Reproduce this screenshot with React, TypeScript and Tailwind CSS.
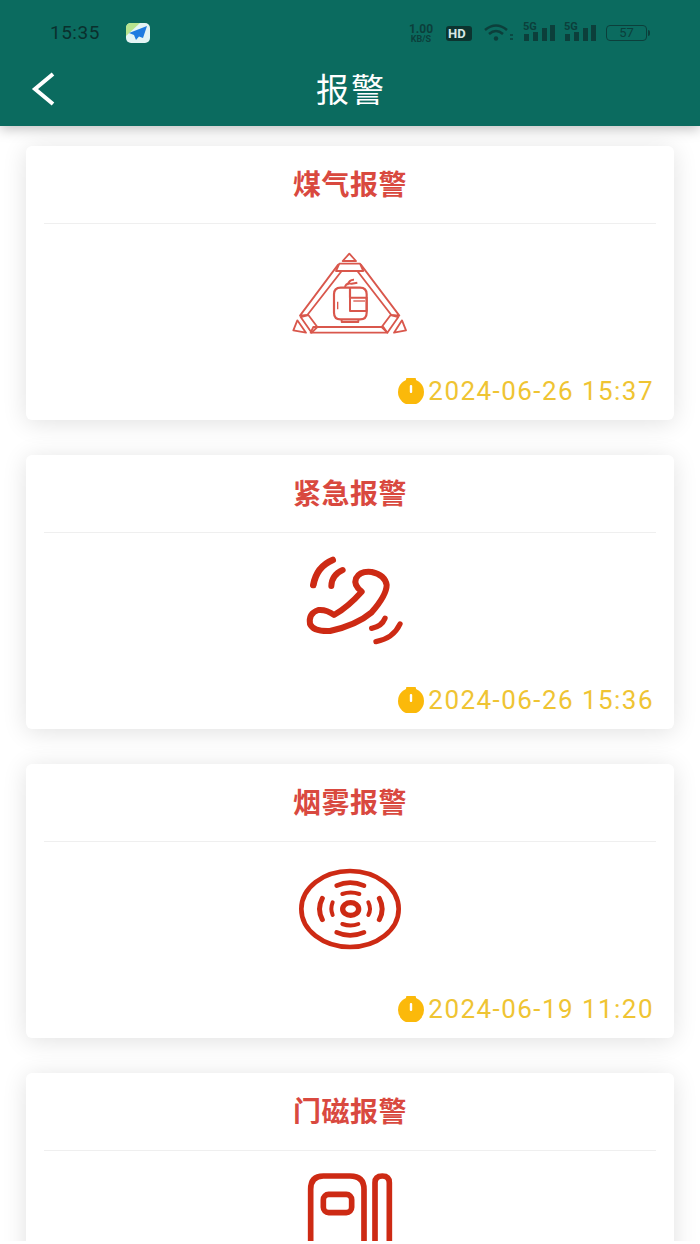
import React from "react";

const GasIcon = () => (
  <svg width="160" height="100" viewBox="0 0 480 300" fill="none" stroke="#d9574c" strokeWidth="5.5" strokeLinejoin="round">
    <path d="M218 60 L238 38 L258 60 Z" />
    <path d="M208 68 L270 68 L280 90 L198 90 Z" />
    <path d="M205 70 L90 224 L112 222 L215 90" />
    <path d="M272 70 L388 224 L364 222 L262 90" />
    <path d="M130 258 L340 258 L352 275 L122 275 Z" />
    <path d="M92 228 L115 222 L142 258 L125 275 Z" />
    <path d="M385 228 L362 222 L335 258 L352 275 Z" />
    <path d="M70 268 L82 238 L108 275 Z" />
    <path d="M408 268 L396 238 L372 275 Z" />
    <path d="M240 170 V140 H212 Q192 140 192 160 V215 Q192 235 212 235 H270 Q290 235 290 215 V160 Q290 140 270 140 H240" strokeWidth="6.5" />
    <path d="M240 170 H290 V210 H240 Z" strokeWidth="6" />
    <path d="M250 180 H285" strokeWidth="4" />
    <path d="M215 235 V243 H265 V235" />
    <path d="M225 138 Q228 125 245 128 L262 125 M232 132 Q238 115 252 116" strokeWidth="6" />
    <path d="M203 182 V205" strokeWidth="4" />
  </svg>
);

const PhoneIcon = () => (
  <svg width="120" height="100" viewBox="0 0 360 300" fill="none" stroke="#cd2a14" strokeWidth="18" strokeLinecap="round" strokeLinejoin="round">
    <path d="M215 125 Q190 105 198 85 Q210 62 245 66 Q285 75 290 105 Q290 135 245 187 Q200 225 120 243 Q70 245 60 222 Q55 190 85 180 Q110 178 132 195 Q175 170 215 125 Z" />
    <path d="M128 30 Q80 50 70 105" strokeWidth="20" />
    <path d="M158 60 Q125 75 124 108" strokeWidth="18" />
    <path d="M245 235 Q275 230 285 205" strokeWidth="16" />
    <path d="M258 275 Q310 265 330 222" strokeWidth="16" />
  </svg>
);

const SmokeIcon = () => (
  <svg width="120" height="100" viewBox="0 0 360 300" fill="none" stroke="#cd2a14" strokeWidth="12" strokeLinecap="round">
    <ellipse cx="180" cy="150" rx="146" ry="114" strokeWidth="14" />
    <ellipse cx="182" cy="150" rx="24" ry="19" strokeWidth="16" />
    <path d="M157 105 Q182 96 208 105" />
    <path d="M140 80 Q180 62 222 80" strokeWidth="14" />
    <path d="M157 195 Q182 204 205 195" />
    <path d="M140 220 Q180 238 222 220" strokeWidth="14" />
    <path d="M128 130 Q120 150 128 168" />
    <path d="M97 118 Q80 150 97 182" strokeWidth="15" />
    <path d="M235 130 Q245 150 235 168" />
    <path d="M268 118 Q285 150 268 182" strokeWidth="15" />
  </svg>
);

const DoorIcon = () => (
  <svg width="120" height="100" viewBox="0 0 360 300" fill="none" stroke="#cd2a14" strokeWidth="17" strokeLinecap="round">
    <path d="M62 300 V85 Q62 45 100 45 H180 Q222 45 222 85 V300" />
    <rect x="100" y="100" width="85" height="55" rx="16" />
    <path d="M255 300 V65 Q255 45 277 45 Q298 45 298 65 V300" />
  </svg>
);

const TimerIcon = () => (
  <svg width="28" height="26" viewBox="0 0 28 26" className="shrink-0">
    <rect x="9" y="0" width="10" height="2.5" rx="1" fill="#fbb90a" />
    <circle cx="14" cy="14" r="13" fill="#fbb90a" />
    <rect x="12.8" y="7" width="2.4" height="8" rx="1" fill="#fff" />
  </svg>
);

const SignalIcon = () => (
  <div className="relative w-[32px] h-[18px]">
    <span className="absolute left-0 -top-[3px] text-[11px] font-bold leading-none text-[#0c3f3b]">5G</span>
    <svg width="32" height="18" viewBox="0 0 32 18" fill="#0c3f3b">
      <rect x="1" y="10" width="5" height="7" />
      <rect x="10" y="8" width="5" height="9" />
      <rect x="19" y="4" width="5" height="13" />
      <rect x="27" y="1" width="5" height="16" />
    </svg>
  </div>
);

const StatusBar = () => (
  <div className="h-[66px] flex items-center pl-[50px] pr-[50px] text-[#0c3f3b]">
    <span className="text-[19px] tracking-[0.5px] mr-[24px] text-[#0a302d]">15:35</span>
    <svg width="24" height="20" viewBox="0 0 24 20" className="mr-auto ml-[2px]">
      <rect width="24" height="20" rx="5" fill="#e4f4f4" />
      <path d="M0 5 Q0 0 5 0 H14 L0 13 Z" fill="#b7e38e" />
      <path d="M21 3 L3 10 L8 12 L10 17 L13 13.5 L17 15 Z" fill="#1f7be0" />
    </svg>
    <div className="flex flex-col items-center font-bold mr-[10px] w-[30px]">
      <span className="text-[12px] leading-[12px]">1.00</span>
      <span className="text-[9px] leading-[9px]">KB/S</span>
    </div>
    <div className="w-[26px] h-[15px] rounded-[3px] bg-[#0c3430] text-[#d8e8e5] text-[13px] font-bold leading-[15px] pl-[2px] mr-[12px]">HD</div>
    <svg width="30" height="18" viewBox="0 0 30 18" fill="none" stroke="#0c3f3b" strokeWidth="2.6" className="mr-[9px]">
      <path d="M1 6 Q12 -3 23 6" />
      <path d="M5 10 Q12 4 19 10" />
      <circle cx="12" cy="14.5" r="2.2" fill="#0c3f3b" stroke="none" />
      <path d="M26 11 h3 M26 15 h3" strokeWidth="1.6" />
    </svg>
    <SignalIcon />
    <div className="w-[9px]" />
    <SignalIcon />
    <div className="w-[10px]" />
    <div className="flex items-center">
      <div className="w-[41px] h-[16px] rounded-[4px] border border-[#0c3f3b] text-[13px] leading-[14px] text-center">57</div>
      <div className="w-[2px] h-[6px] ml-[1px] bg-[#0c3f3b] rounded-r-sm" />
    </div>
  </div>
);

const AlarmCard = ({ title, time, children }: { title: string; time: string; children: React.ReactNode }) => (
  <div className="h-[274px] shrink-0 bg-white rounded-[6px] px-[18px] shadow-[0_3px_24px_rgba(0,0,0,0.12)]">
    <div className="h-[78px] flex items-center justify-center border-b border-[#efefef] text-[28px] font-bold text-[#d9493f] tracking-[0.5px]">
      <span className="translate-y-[1px]">{title}</span>
    </div>
    <div className="h-[134px] flex items-center justify-center">{children}</div>
    <div className="h-[42px] mt-[12px] flex items-center justify-end gap-[3px] pr-[2px] text-[26px] text-[#efc433] font-['Roboto',sans-serif] tracking-[1.45px]">
      <TimerIcon />
      {time}
    </div>
  </div>
);

const App: React.FC = () => {
  return (
    <div className="w-[700px] h-[1244px] overflow-hidden bg-white flex flex-col font-['Roboto','Noto_Sans_CJK_SC',sans-serif]">
      <div className="h-[126px] shrink-0 bg-[#0b6b5f] shadow-[0_3px_12px_rgba(0,0,0,0.25)] relative z-10">
        <StatusBar />
        <div className="h-[48px] flex items-center justify-center relative">
          <svg width="26" height="34" viewBox="0 0 26 34" fill="none" stroke="#fff" strokeWidth="4" className="absolute left-[31px] top-[6px]">
            <path d="M22 2 L4 17 L22 32" />
          </svg>
          <span className="text-[33px] text-white tracking-[2px] pl-[2px] -translate-y-[1px] font-['Noto_Sans_CJK_SC',sans-serif]">报警</span>
        </div>
      </div>
      <div className="h-[1115px] overflow-hidden flex flex-col gap-[35px] px-[26px] pt-[20px]">
        <AlarmCard title="煤气报警" time="2024-06-26 15:37">
          <GasIcon />
        </AlarmCard>
        <AlarmCard title="紧急报警" time="2024-06-26 15:36">
          <PhoneIcon />
        </AlarmCard>
        <AlarmCard title="烟雾报警" time="2024-06-19 11:20">
          <SmokeIcon />
        </AlarmCard>
        <AlarmCard title="门磁报警" time="">
          <div className="self-start mt-[10px]">
            <DoorIcon />
          </div>
        </AlarmCard>
      </div>
    </div>
  );
};

export default App;
